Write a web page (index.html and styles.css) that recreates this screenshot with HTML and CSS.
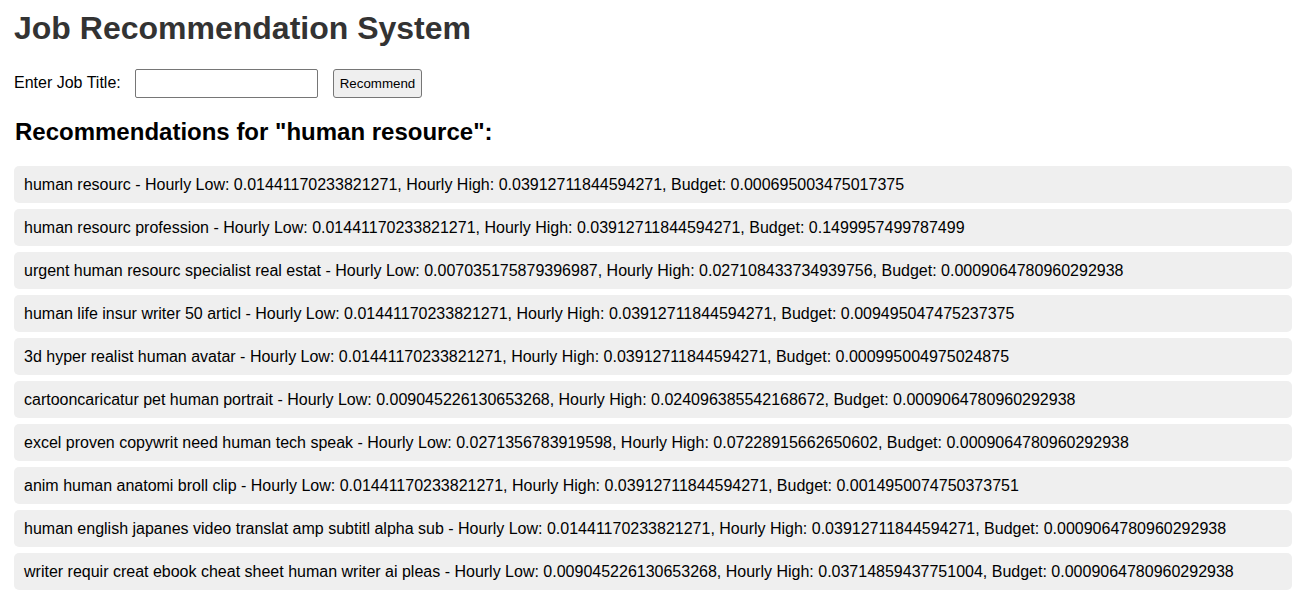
FILE: index.html
```html
<!DOCTYPE html>
<html>
<head>
<meta charset="utf-8">
<title>Job Recommendation System</title>
<link rel="stylesheet" href="styles.css">
</head>
<body>
<h1 class="title">Job Recommendation System</h1>
<form class="search">
  <label class="search-label" for="job">Enter Job Title:</label>
  <input class="search-input" id="job" type="text">
  <button class="search-btn" type="button">Recommend</button>
</form>
<h2 class="subtitle">Recommendations for "human resource":</h2>
<ul class="results">
  <li class="result">human resourc - Hourly Low: 0.01441170233821271, Hourly High: 0.03912711844594271, Budget: 0.000695003475017375</li>
  <li class="result">human resourc profession - Hourly Low: 0.01441170233821271, Hourly High: 0.03912711844594271, Budget: 0.1499957499787499</li>
  <li class="result">urgent human resourc specialist real estat - Hourly Low: 0.007035175879396987, Hourly High: 0.027108433734939756, Budget: 0.0009064780960292938</li>
  <li class="result">human life insur writer 50 articl - Hourly Low: 0.01441170233821271, Hourly High: 0.03912711844594271, Budget: 0.009495047475237375</li>
  <li class="result">3d hyper realist human avatar - Hourly Low: 0.01441170233821271, Hourly High: 0.03912711844594271, Budget: 0.000995004975024875</li>
  <li class="result">cartooncaricatur pet human portrait - Hourly Low: 0.009045226130653268, Hourly High: 0.024096385542168672, Budget: 0.0009064780960292938</li>
  <li class="result">excel proven copywrit need human tech speak - Hourly Low: 0.0271356783919598, Hourly High: 0.07228915662650602, Budget: 0.0009064780960292938</li>
  <li class="result">anim human anatomi broll clip - Hourly Low: 0.01441170233821271, Hourly High: 0.03912711844594271, Budget: 0.0014950074750373751</li>
  <li class="result">human english japanes video translat amp subtitl alpha sub - Hourly Low: 0.01441170233821271, Hourly High: 0.03912711844594271, Budget: 0.0009064780960292938</li>
  <li class="result">writer requir creat ebook cheat sheet human writer ai pleas - Hourly Low: 0.009045226130653268, Hourly High: 0.03714859437751004, Budget: 0.0009064780960292938</li>
</ul>
</body>
</html>
```
FILE: styles.css
```css
html, body {
  margin: 0;
  padding: 0;
}
body {
  font-family: "Liberation Sans", Arial, sans-serif;
  font-size: 16px;
  color: #000;
  padding: 10px 8px 0 14px;
  background: #fff;
}
.title {
  margin: 0;
  font-size: 32px;
  line-height: 37px;
  font-weight: bold;
  color: #333;
}
.search {
  display: flex;
  align-items: center;
  margin-top: 22px;
  height: 28px;
}
.search-label {
  font-size: 16px;
  margin-right: 14px;
}
.search-input {
  box-sizing: border-box;
  width: 183px;
  height: 29px;
  margin: 0 15px 0 0;
  border: 1px solid #767676;
  border-radius: 2px;
  padding: 1px 2px;
  font-size: 13.33px;
}
.search-btn {
  box-sizing: border-box;
  height: 29px;
  width: 89px;
  padding: 1px 6px;
  font-family: "Liberation Sans", Arial, sans-serif;
  font-size: 13.33px;
  color: #000;
  background: #efefef;
  border: 1px solid #767676;
  border-radius: 3px;
}
.subtitle {
  margin: 21px 0 0 1px;
  font-size: 24px;
  line-height: 28px;
  font-weight: bold;
}
.results {
  list-style: none;
  margin: 20px 0 0;
  padding: 0;
}
.result {
  background: #efefef;
  border-radius: 5px;
  padding: 9px 10px;
  line-height: 19px;
  margin-bottom: 6px;
}
```
